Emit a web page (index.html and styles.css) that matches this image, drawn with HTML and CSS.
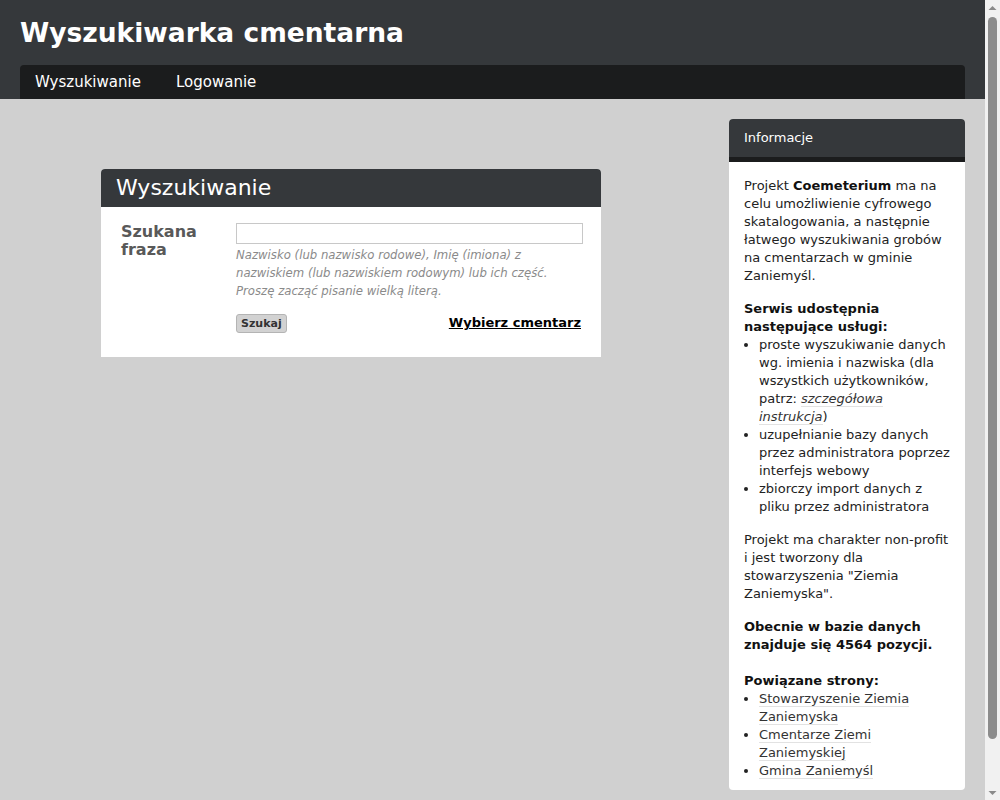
FILE: index.html
```html
<!DOCTYPE html>
<html lang="pl">
<head>
    <meta charset="UTF-8">
    <meta name="viewport" content="width=device-width, initial-scale=1.0">
    <title>Wyszukiwarka cmentarna</title>
    <link rel="stylesheet" href="styles.css">
</head>
<body>
    <header class="site-header">
        <h1 class="site-title">Wyszukiwarka cmentarna</h1>
        <nav class="main-nav">
            <a href="#" class="nav-item">Wyszukiwanie</a>
            <a href="#" class="nav-item">Logowanie</a>
        </nav>
    </header>

    <div class="container">
        <main class="content">
            <section class="search-box">
                <h2 class="box-title">Wyszukiwanie</h2>
                <form class="search-form" id="search-form">
                    <label for="phrase" class="field-label">Szukana fraza</label>
                    <div class="field">
                        <input type="text" id="phrase" name="phrase" class="field-input">
                        <p class="field-hint">Nazwisko (lub nazwisko rodowe), Imię (imiona) z nazwiskiem (lub nazwiskiem rodowym) lub ich część. Proszę zacząć pisanie wielką literą.</p>
                        <div class="form-actions">
                            <button type="submit" class="search-button">Szukaj</button>
                            <a href="#" class="choose-link">Wybierz cmentarz</a>
                        </div>
                    </div>
                </form>
            </section>
        </main>

        <aside class="sidebar">
            <h3 class="sidebar-title">Informacje</h3>
            <div class="sidebar-body">
                <p>Projekt <strong>Coemeterium</strong> ma na celu umożliwienie cyfrowego skatalogowania, a następnie łatwego wyszukiwania grobów na cmentarzach w gminie Zaniemyśl.</p>

                <p class="info-heading"><strong>Serwis udostępnia następujące usługi:</strong></p>
                <ul class="info-list">
                    <li>proste wyszukiwanie danych wg. imienia i nazwiska (dla wszystkich użytkowników, patrz: <a href="#" class="info-link"><em>szczegółowa instrukcja</em></a>)</li>
                    <li>uzupełnianie bazy danych przez administratora poprzez interfejs webowy</li>
                    <li>zbiorczy import danych z pliku przez administratora</li>
                </ul>

                <p>Projekt ma charakter non-profit i jest tworzony dla stowarzyszenia "Ziemia Zaniemyska".</p>

                <p><strong>Obecnie w bazie danych znajduje się 4564 pozycji.</strong></p>

                <p class="info-heading related"><strong>Powiązane strony:</strong></p>
                <ul class="info-list">
                    <li><a href="#" class="info-link">Stowarzyszenie Ziemia Zaniemyska</a></li>
                    <li><a href="#" class="info-link">Cmentarze Ziemi Zaniemyskiej</a></li>
                    <li><a href="#" class="info-link">Gmina Zaniemyśl</a></li>
                </ul>
            </div>
        </aside>
    </div>

    <!-- desktop-style scrollbar as in the original window -->
    <div class="scrollbar" aria-hidden="true">
        <svg class="scroll-arrow" width="15" height="15" viewBox="0 0 15 15">
            <polygon points="3.5,10 7.5,6 11.5,10" fill="#8a8a8a"/>
        </svg>
        <div class="scroll-thumb"></div>
        <svg class="scroll-arrow" width="15" height="15" viewBox="0 0 15 15">
            <polygon points="3.5,6 7.5,10 11.5,6" fill="#8a8a8a"/>
        </svg>
    </div>

    <script>
        document.getElementById('search-form').addEventListener('submit', function(e) {
            e.preventDefault();
        });
    </script>
</body>
</html>
```

FILE: styles.css
```css
:root {
    --header-bg: #35383b;
    --nav-bg: #1b1c1d;
    --page-bg: #d0d0d0;
    --radius: 4px;
}

body {
    font-family: 'DejaVu Sans', 'Noto Sans', sans-serif;
    background-color: var(--page-bg);
    margin: 0 15px 0 0;
    padding: 0;
    color: #222;
}

.site-header {
    background-color: var(--header-bg);
    padding: 16px 20px 0;
}

.site-title {
    margin: 0 0 15px;
    font-size: 26.5px;
    line-height: 34px;
    font-weight: bold;
    color: #fff;
}

.main-nav {
    background-color: var(--nav-bg);
    border-radius: var(--radius) var(--radius) 0 0;
    height: 34px;
}

.nav-item {
    display: inline-block;
    padding: 0 15px;
    line-height: 34px;
    font-size: 15px;
    color: #fff;
    text-decoration: none;
}

.container {
    display: flex;
    align-items: flex-start;
    padding: 20px 20px 64px;
}

.content {
    flex: 1;
}

.search-box {
    width: 500px;
    margin: 50px 0 0 81px;
    background-color: #fff;
    border-radius: var(--radius) var(--radius) 0 0;
}

.box-title {
    margin: 0;
    padding: 0 15px;
    height: 38px;
    line-height: 38px;
    font-size: 22px;
    font-weight: normal;
    color: #fff;
    background-color: var(--header-bg);
    border-radius: var(--radius) var(--radius) 0 0;
}

.search-form {
    display: grid;
    grid-template-columns: 115px 1fr;
    padding: 16px 18px 24px 20px;
}

.field-label {
    font-size: 16px;
    line-height: 18px;
    font-weight: bold;
    color: #595959;
}

.field-input {
    display: block;
    width: 100%;
    height: 21px;
    margin: 0;
    padding: 0 4px;
    border: 1px solid #c8c8c8;
    font-family: 'DejaVu Sans', sans-serif;
    font-size: 13px;
    box-sizing: border-box;
    outline: none;
}

.field-hint {
    margin: 2px 0 0;
    font-size: 11.7px;
    line-height: 18px;
    font-style: italic;
    color: #8a8a8a;
}

.form-actions {
    display: flex;
    justify-content: space-between;
    align-items: baseline;
    margin-top: 14px;
    padding-right: 2px;
}

.search-button {
    height: 19px;
    font-family: 'DejaVu Sans', sans-serif;
    font-size: 11px;
    line-height: 13px;
    font-weight: bold;
    color: #333;
    background-color: #d2d2d2;
    border: 1px solid #b4b4b4;
    border-radius: 3px;
    padding: 2px 4px;
    cursor: pointer;
}

.choose-link {
    font-size: 13px;
    font-weight: bold;
    color: #000;
    text-decoration: underline;
}

.sidebar {
    flex: none;
    width: 236px;
    background-color: #fff;
    border-radius: var(--radius);
}

.sidebar-title {
    margin: 0;
    padding: 0 15px;
    height: 38px;
    line-height: 38px;
    font-size: 13px;
    font-weight: normal;
    color: #fff;
    background-color: var(--header-bg);
    border-bottom: 5px solid var(--nav-bg);
    border-radius: var(--radius) var(--radius) 0 0;
}

.sidebar-body {
    padding: 15px 15px 10px;
    font-size: 13px;
    line-height: 18px;
}

.sidebar-body p {
    margin: 0 0 15px;
}

.sidebar-body strong {
    color: #111;
}

.sidebar-body .info-heading {
    margin-bottom: 0;
}

.sidebar-body .related {
    margin-top: 18px;
}

.info-list {
    margin: 0 0 15px;
    padding-left: 15px;
}

.info-list:last-child {
    margin-bottom: 0;
}

.info-link {
    color: #333;
    text-decoration: none;
    border-bottom: 1px solid #e2e2e2;
}

.scrollbar {
    position: fixed;
    top: 0;
    right: 0;
    bottom: 0;
    width: 15px;
    display: flex;
    flex-direction: column;
    background-color: #f1f1f1;
}

.scroll-arrow {
    display: block;
    flex: none;
}

.scroll-thumb {
    flex: none;
    height: 722px;
    margin: 2px 3px auto;
    background-color: #8c8c8c;
    border-radius: 5px;
}
```
